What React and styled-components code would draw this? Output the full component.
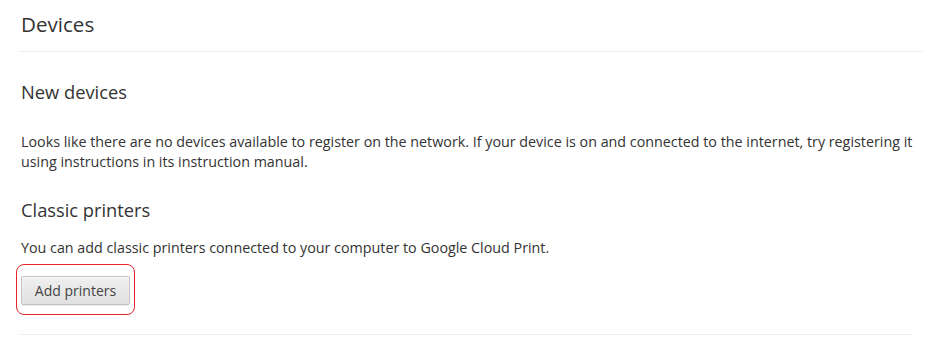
import React from "react";
import styled, { createGlobalStyle } from "styled-components";

const Global = createGlobalStyle`
  html, body { margin: 0; padding: 0; background: #fff; }
  body { font-family: "Open Sans", "Noto Sans", sans-serif; color: #333; }
`;

const Page = styled.div`
  width: 930px;
  padding: 10px 7px 0 20px;
  box-sizing: border-box;
`;

const Header = styled.header`
  border-bottom: 1px solid #ececec;
  padding-bottom: 13px;
`;

const Title = styled.h1`
  margin: 0 0 0 1px;
  font-size: 20.6px;
  line-height: 28px;
  font-weight: 400;
  color: #333;
`;

const Section = styled.section`
  margin-right: 10px;
  padding-top: ${(p) => p.$top}px;
  padding-bottom: ${(p) => p.$bottom || 0}px;
  border-bottom: ${(p) => (p.$divider ? "1px solid #ececec" : "none")};
`;

const SubTitle = styled.h3`
  margin: 0 0 ${(p) => p.$gap}px 1px;
  font-size: 18.3px;
  line-height: 24px;
  font-weight: 400;
  color: #333;
`;

const Text = styled.p`
  margin: 0 0 0 1px;
  font-size: 14.3px;
  line-height: 20px;
  color: #333;
`;

const Highlight = styled.div`
  position: relative;
  display: inline-block;
  margin: 18px 0 0 1px;
  &::after {
    content: "";
    position: absolute;
    left: -5px;
    top: -12px;
    right: -5px;
    bottom: -10px;
    border: 1.5px solid #e3262b;
    border-radius: 8px;
    pointer-events: none;
  }
`;

const Button = styled.button`
  display: block;
  width: 109px;
  height: 29px;
  padding: 0;
  font-family: inherit;
  font-size: 14px;
  color: #444;
  background: linear-gradient(#f0f0f0, #e0e0e0);
  border: 1px solid #c4c4c4;
  border-radius: 2px;
  box-shadow: 0 1px 0 rgba(0, 0, 0, 0.08), inset 0 1px 2px rgba(255, 255, 255, 0.75);
`;

export default function App() {
  return (
    <Page>
      <Global />
      <Header>
        <Title>Devices</Title>
      </Header>
      <Section $top={28}>
        <SubTitle $gap={28}>New devices</SubTitle>
        <Text>
          Looks like there are no devices available to register on the network. If your device is on and
          connected to the internet, try registering it using instructions in its instruction manual.
        </Text>
      </Section>
      <Section $top={26} $bottom={29} $divider>
        <SubTitle $gap={16}>Classic printers</SubTitle>
        <Text>You can add classic printers connected to your computer to Google Cloud Print.</Text>
        <Highlight>
          <Button>Add printers</Button>
        </Highlight>
      </Section>
    </Page>
  );
}
